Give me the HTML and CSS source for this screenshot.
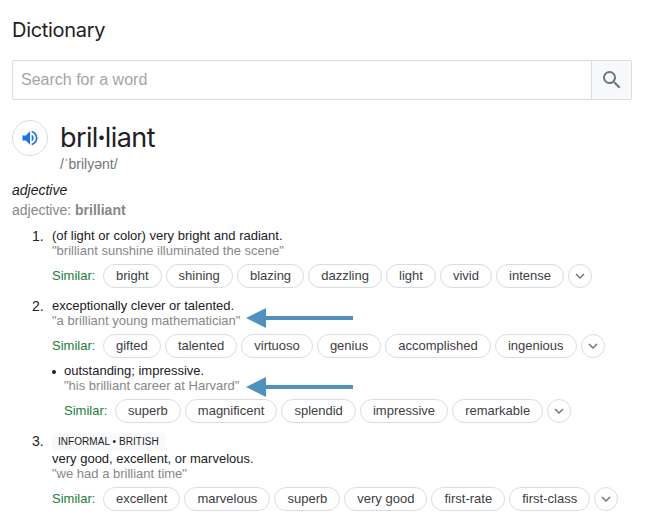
FILE: index.html
```
<!DOCTYPE html>
<html lang="en">
<head>
<meta charset="utf-8">
<title>Dictionary</title>
<link rel="stylesheet" href="styles.css">
</head>
<body>
<svg class="defs" width="0" height="0" aria-hidden="true">
  <symbol id="chevron" viewBox="0 0 24 24"><path d="M16.59 8.59 12 13.17 7.41 8.59 6 10l6 6 6-6z"/></symbol>
  <symbol id="arrow" viewBox="0 0 107 20"><path d="M0 10 20 0v8h87v4H20v8z"/></symbol>
</svg>
<main>
  <h1 class="title">Dictionary</h1>
  <div class="search">
    <span class="field">Search for a word</span>
    <button class="go" aria-label="Search"><svg viewBox="0 0 24 24"><path d="M15.5 14h-.79l-.28-.27A6.47 6.47 0 0 0 16 9.5 6.5 6.5 0 1 0 9.5 16c1.61 0 3.09-.59 4.23-1.57l.27.28v.79l5 4.99L20.49 19l-4.99-5zm-6 0C7.01 14 5 11.99 5 9.5S7.01 5 9.5 5 14 7.01 14 9.5 11.99 14 9.5 14z"/></svg></button>
  </div>
  <header class="word">
    <button class="speak" aria-label="Listen"><svg viewBox="0 0 24 24"><path d="M3 9v6h4l5 5V4L7 9H3zm13.5 3A4.5 4.5 0 0 0 14 7.97v8.05c1.48-.73 2.5-2.25 2.5-4.02zM14 3.23v2.06c2.89.86 5 3.54 5 6.71s-2.11 5.85-5 6.71v2.06c4.01-.91 7-4.49 7-8.77s-2.99-7.86-7-8.77z"/></svg></button>
    <div>
      <div class="headword">bril<b>·</b>liant</div>
      <div class="phonetic">/ˈbrilyənt/</div>
    </div>
  </header>
  <div class="pos">adjective</div>
  <div class="forms">adjective: <b>brilliant</b></div>

  <section class="sense">
    <span class="num">1.</span>
    <div class="body">
      <div class="def">(of light or color) very bright and radiant.</div>
      <div class="example"><span>"brilliant sunshine illuminated the scene"</span></div>
      <div class="similar"><span class="label">Similar:</span><span class="chip">bright</span><span class="chip">shining</span><span class="chip">blazing</span><span class="chip">dazzling</span><span class="chip">light</span><span class="chip">vivid</span><span class="chip">intense</span><span class="more"><svg><use href="#chevron"/></svg></span></div>
    </div>
  </section>

  <section class="sense">
    <span class="num">2.</span>
    <div class="body">
      <div class="def">exceptionally clever or talented.</div>
      <div class="example"><span>"a brilliant young mathematician"</span><svg class="arrow"><use href="#arrow"/></svg></div>
      <div class="similar"><span class="label">Similar:</span><span class="chip">gifted</span><span class="chip">talented</span><span class="chip">virtuoso</span><span class="chip">genius</span><span class="chip">accomplished</span><span class="chip">ingenious</span><span class="more"><svg><use href="#chevron"/></svg></span></div>
      <div class="sub">
        <div class="def">outstanding; impressive.</div>
        <div class="example"><span>"his brilliant career at Harvard"</span><svg class="arrow"><use href="#arrow"/></svg></div>
        <div class="similar"><span class="label">Similar:</span><span class="chip">superb</span><span class="chip">magnificent</span><span class="chip">splendid</span><span class="chip">impressive</span><span class="chip">remarkable</span><span class="more"><svg><use href="#chevron"/></svg></span></div>
      </div>
    </div>
  </section>

  <section class="sense">
    <span class="num">3.</span>
    <div class="body">
      <div class="tag">INFORMAL • BRITISH</div>
      <div class="def">very good, excellent, or marvelous.</div>
      <div class="example"><span>"we had a brilliant time"</span></div>
      <div class="similar"><span class="label">Similar:</span><span class="chip">excellent</span><span class="chip">marvelous</span><span class="chip">superb</span><span class="chip">very good</span><span class="chip">first-rate</span><span class="chip">first-class</span><span class="more"><svg><use href="#chevron"/></svg></span></div>
    </div>
  </section>
</main>
</body>
</html>
```
FILE: styles.css
```
* { box-sizing: border-box; }
body {
  margin: 0;
  background: #fff;
  color: #202124;
  font: 13px/15px "Liberation Sans", Arial, sans-serif;
}
.defs { position: absolute; }
main { height: 520px; padding: 16px 13px 0 12px; overflow: hidden; }
.title {
  margin: 0 0 16px;
  font: 400 20px/28px Inter, sans-serif;
  letter-spacing: -0.3px;
}
.search {
  display: flex;
  height: 40px;
  border: 1px solid #dadce0;
  border-radius: 2px;
}
.field { flex: 1; padding-left: 8px; font-size: 16px; line-height: 38px; color: #a5a5a5; }
.go {
  display: grid;
  place-items: center;
  width: 40px;
  padding: 0;
  border: 0;
  border-left: 1px solid #dadce0;
  background: #f8f9fa;
}
.go svg { width: 24px; height: 24px; fill: #70757a; }
.word { display: flex; gap: 12px; height: 82px; padding-top: 20px; }
.speak {
  display: grid;
  place-items: center;
  width: 36px;
  height: 36px;
  padding: 0;
  border: 1px solid #dadce0;
  border-radius: 50%;
  background: #fff;
}
.speak svg { width: 20px; height: 20px; fill: #1a73e8; }
.headword { font: 400 27px/36px Inter, sans-serif; letter-spacing: -0.6px; }
.headword b { margin: 0 -0.7px; }
.phonetic { font-size: 14px; line-height: 16px; color: #70757a; }
.pos { font-size: 14px; font-style: italic; line-height: 16px; }
.forms { margin-top: 4px; font-size: 14px; line-height: 16px; color: #878787; }
.sense { display: flex; margin-top: 10px; padding-left: 20px; }
.num { width: 20px; font-size: 14px; line-height: 16px; }
.body { flex: 1; }
.example { display: flex; position: relative; color: #878787; }
.arrow { position: absolute; left: 194px; top: -5px; width: 107px; height: 20px; fill: #4f92bf; }
.sub .arrow { left: 182px; top: -1px; }
.similar { display: flex; gap: 4.1px; margin-top: 6px; height: 24px; line-height: 22px; white-space: nowrap; }
.label { width: 46.9px; line-height: 24px; color: #188038; }
.chip { padding: 0 12px; border: 1px solid #dadce0; border-radius: 12px; color: #3c4043; }
.more {
  display: grid;
  place-items: center;
  width: 24px;
  height: 24px;
  border: 1px solid #dadce0;
  border-radius: 50%;
}
.more svg { width: 18px; height: 18px; fill: #70757a; }
.sub { position: relative; margin-top: 5px; padding-left: 12px; }
.sub::before {
  content: "";
  position: absolute;
  left: 0;
  top: 7px;
  width: 4px;
  height: 4px;
  border-radius: 50%;
  background: #202124;
}
.tag {
  width: 113px;
  height: 18px;
  padding-left: 6px;
  border-radius: 2px;
  background: #f8f9fa;
  font-size: 10px;
  line-height: 17px;
  letter-spacing: 0.05px;
  white-space: nowrap;
}
```
